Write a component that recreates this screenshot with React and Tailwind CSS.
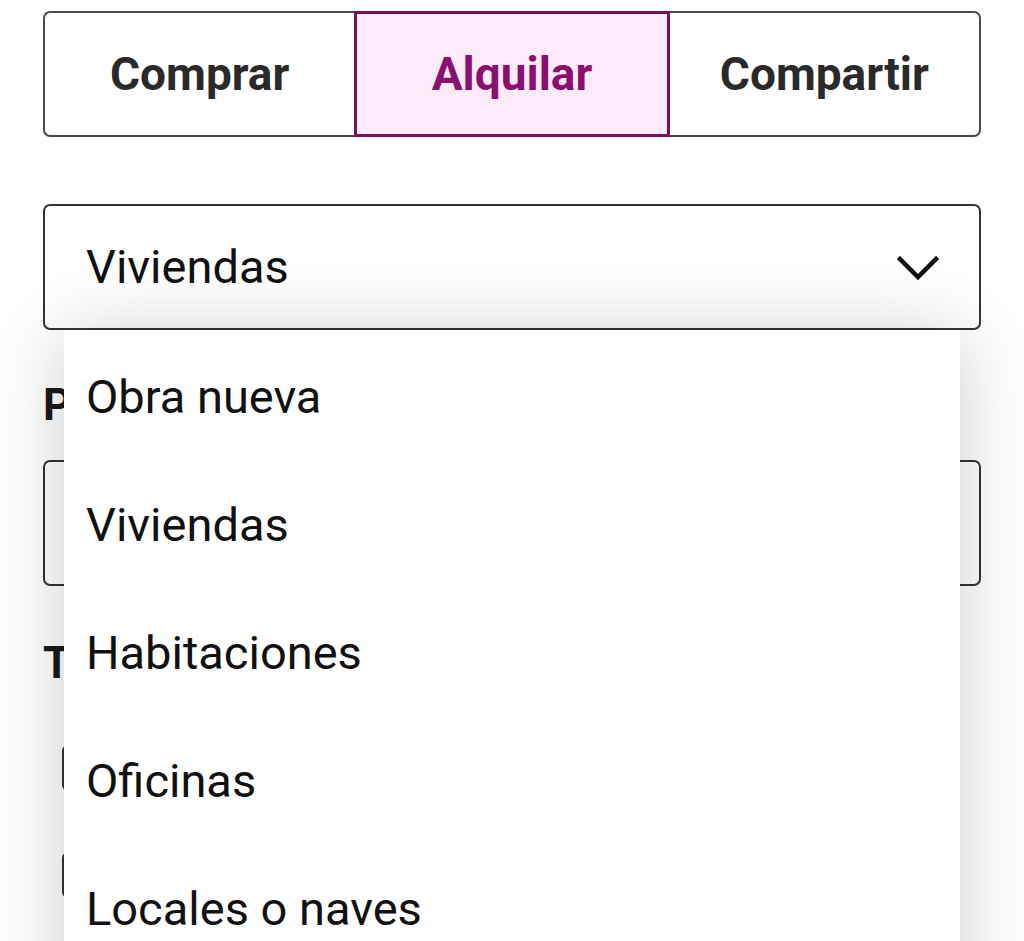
import React from "react";

export default function App() {
  const items = ["Obra nueva", "Viviendas", "Habitaciones", "Oficinas", "Locales o naves"];
  return (
    <div className="relative w-[1024px] h-[941px] overflow-hidden bg-white font-['Roboto',sans-serif]">
      <div className="px-[43px] pt-[11px]">
        {/* Segmented control */}
        <div className="flex h-[126px]">
          <div className="flex-1 flex items-center justify-center border-2 border-r-0 border-[#4a4a4a] rounded-l-[7px] text-[46px] font-bold text-[#2a2a2a]">
            Comprar
          </div>
          <div className="flex-1 flex items-center justify-center border-[3px] border-[#7a0f62] bg-[#fdebf9] text-[46px] font-bold text-[#8a106f]">
            Alquilar
          </div>
          <div className="flex-1 flex items-center justify-center border-2 border-l-0 border-[#4a4a4a] rounded-r-[7px] text-[46px] font-bold text-[#2a2a2a]">
            Compartir
          </div>
        </div>

        {/* Select */}
        <div className="mt-[67px] h-[126px] flex items-center justify-between border-2 border-[#333] rounded-[7px] pl-[41px] pr-[40px]">
          <span className="text-[47px] text-[#111]">Viviendas</span>
          <svg width="42" height="26" viewBox="0 0 42 26" className="mt-[2px]">
            <path d="M3 4 L21 22 L39 4" fill="none" stroke="#111" strokeWidth="4.5" strokeLinecap="square" />
          </svg>
        </div>

        {/* Hidden behind menu */}
        <div className="mt-[50px] text-[44px] font-bold text-[#1a1a1a] leading-[50px]">Precio</div>
        <div className="mt-[30px] h-[126px] border-2 border-[#333] rounded-[7px]"></div>
        <div className="mt-[52px] text-[44px] font-bold text-[#1a1a1a] leading-[50px]">Tipo de vivienda</div>
        <div className="mt-[57px] ml-[19px] w-[46px] h-[46px] border-[3px] border-[#333] rounded-[6px]"></div>
        <div className="mt-[61px] ml-[19px] w-[46px] h-[46px] border-[3px] border-[#333] rounded-[6px]"></div>
      </div>

      {/* Dropdown menu */}
      <div className="absolute left-[64px] top-[330px] w-[896px] h-[700px] bg-white shadow-[0_4px_70px_rgba(0,0,0,0.2)] pt-[3px]">
        {items.map((t) => (
          <div key={t} className="h-[128px] flex items-center pl-[22px] text-[47px] text-[#111]">
            {t}
          </div>
        ))}
      </div>
    </div>
  );
}
